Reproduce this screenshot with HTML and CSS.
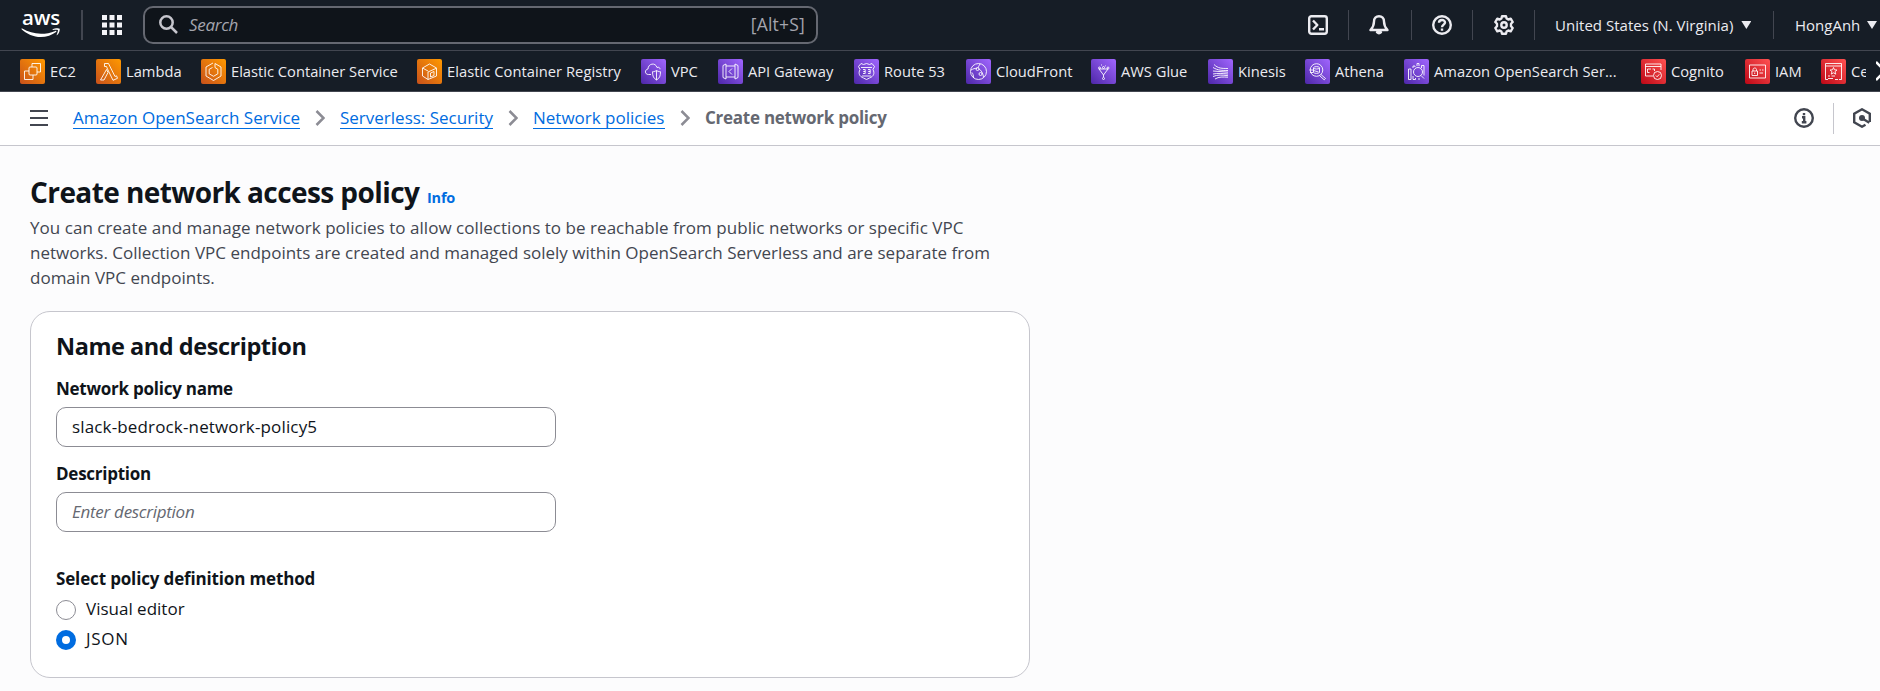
FILE: index.html
```
<!DOCTYPE html>
<html lang="en">
<head>
<meta charset="utf-8">
<title>Create network policy</title>
<link rel="stylesheet" href="styles.css">
</head>
<body>
<svg class="defs" aria-hidden="true">
  <defs>
    <linearGradient id="orange" x1="0" y1="1" x2="1" y2="0"><stop offset="0" stop-color="#c8511b"/><stop offset="1" stop-color="#f90"/></linearGradient>
    <linearGradient id="purple" x1="0" y1="1" x2="1" y2="0"><stop offset="0" stop-color="#4d27a8"/><stop offset="1" stop-color="#a166ff"/></linearGradient>
    <linearGradient id="red" x1="0" y1="1" x2="1" y2="0"><stop offset="0" stop-color="#bd0816"/><stop offset="1" stop-color="#ff5252"/></linearGradient>
  </defs>
</svg>

<header class="topbar">
  <a class="logo">
    <span class="logo-text">aws</span>
    <svg class="logo-smile" width="40" height="10" viewBox="0 0 40 10"><path d="M.6 1.2C.2.8.6.3 1.2.6 7 4 13 5.800 20 5.800c4.600 0 9.700-1 14.400-2.900.8-.3 1.400.5.7 1C31 7 25.500 9 19.800 9 12.500 9 5.800 6.100.6 1.200z"/><path d="M36.800 2.100c-.5-.7-3.500-.3-4.900-.2-.4.1-.5-.3-.1-.6C34.200-.3 38.100.1 38.600.7c.4.6-.1 4.500-2.400 6.400-.3.300-.7.100-.5-.3.500-1.300 1.600-4.100 1.100-4.700z"/></svg>
  </a>
  <span class="logo-divider"></span>
  <svg class="apps" width="20" height="20" viewBox="0 0 20 20"><path d="M0 0h5v5H0zM7.500 0h5v5h-5zM15 0h5v5h-5zM0 7.500h5v5H0zM7.500 7.500h5v5h-5zM15 7.500h5v5h-5zM0 15h5v5H0zM7.500 15h5v5h-5zM15 15h5v5h-5z"/></svg>
  <div class="search">
    <svg width="19" height="19" viewBox="0 0 19 19"><circle cx="7.500" cy="7.500" r="6.200"/><path d="M12 12l6 6"/></svg>
    <span class="search-hint">Search</span>
    <span class="search-key">[Alt+S]</span>
  </div>
  <nav class="tools">
    <span class="tool"><svg width="20" height="20" viewBox="0 0 20 20"><rect x="1.200" y="1.200" width="17.600" height="17.600" rx="2.200"/><path d="M5 5.500l4.300 4.500L5 14.500M11 14.200h5"/></svg></span>
    <span class="tool bell"><svg width="20" height="20" viewBox="0 0 20 20"><path d="M10 1.200c-3 0-5 2.200-5 5.200 0 4-1.300 6.200-3.500 8.600h17c-2.200-2.400-3.500-4.600-3.500-8.600 0-3-2-5.200-5-5.200z"/><path d="M8 17.200q2 2.200 4 0z"/></svg></span>
    <span class="tool"><svg width="20" height="20" viewBox="0 0 20 20"><circle cx="10" cy="10" r="8.800"/><path d="M7 7.800c0-3.800 6-3.600 6-.3 0 2-3 2.200-3 4.700M10 13.600v2.200"/></svg></span>
    <span class="tool"><svg width="20" height="20" viewBox="0 0 20 20"><path d="M8 1.200h4l.6 2.300 1.700 1 2.400-.8 2 3.300-1.700 1.800v2.400l1.700 1.800-2 3.300-2.400-.8-1.700 1-.6 2.300H8l-.6-2.300-1.700-1-2.400.8-2-3.300L3 11.200V8.800L1.300 7l2-3.300 2.400.8 1.700-1z"/><circle cx="10" cy="10" r="2.700"/></svg></span>
    <span class="tool menu"><span class="region">United States (N. Virginia)</span><i class="caret"></i></span>
    <span class="tool menu"><span class="user">HongAnh</span><i class="caret"></i></span>
  </nav>
</header>

<nav class="favorites">
  <a class="fav"><svg class="tile" viewBox="0 0 25 25"><rect width="25" height="25" rx="2" fill="url(#orange)"/><g><rect x="9" y="8" width="8" height="8" rx="1"/><path d="M12 8V4.500h8.500V13H17M9 12H4.500v8.500H13V16"/></g></svg><span>EC2</span></a>
  <a class="fav"><svg class="tile" viewBox="0 0 25 25"><rect width="25" height="25" rx="2" fill="url(#orange)"/><g><path d="M8.500 4.500h4l6.500 13 1.500-.7 1 2.500-4.500 2L11.500 10l-1-2.500h-2zM10.500 10.500l1.500 3-4 7.500H4.500z"/></g></svg><span>Lambda</span></a>
  <a class="fav"><svg class="tile" viewBox="0 0 25 25"><rect width="25" height="25" rx="2" fill="url(#orange)"/><g><path d="M12 4L5 8v9l7.500 4.500L20 17V8l-6-3.500v4l2.800 1.800v4.500l-4.300 2.500-4.300-2.500v-4.500L11.500 8.500"/></g></svg><span>Elastic Container Service</span></a>
  <a class="fav"><svg class="tile" viewBox="0 0 25 25"><rect width="25" height="25" rx="2" fill="url(#orange)"/><g><path d="M11 20.500L5.500 17V9l7-4 7 4M5.500 9l5.500 3M11 20.500V13l8.500-3.800V17z"/><path d="M13.500 18v-4l3.500-1.500v4z"/></g></svg><span class="ecr">Elastic Container Registry</span></a>
  <a class="fav"><svg class="tile" viewBox="0 0 25 25"><rect width="25" height="25" rx="2" fill="url(#purple)"/><g><path d="M10 15.500H7.500C3.500 15.500 3.500 10.500 7 10c0-5.500 7.500-7 9-1.500 2-.8 3 .3 3 1.800"/><path d="M15.500 11.500c2 1.200 3 1.200 4 1.200 0 4.500-1 6.500-4 8.300-3-1.800-4-3.800-4-8.300 1 0 2 0 4-1.200zM15.500 11.500V21"/></g></svg><span>VPC</span></a>
  <a class="fav"><svg class="tile" viewBox="0 0 25 25"><rect width="25" height="25" rx="2" fill="url(#purple)"/><g><path d="M8 5L5 6.500v12L8 20zM17 5l3 1.500v12L17 20zM8 7h9M8 18h9M14 9.500l-3 3 3 3"/></g></svg><span>API Gateway</span></a>
  <a class="fav"><svg class="tile" viewBox="0 0 25 25"><rect width="25" height="25" rx="2" fill="url(#purple)"/><g><path d="M7 4.500l2.500 1 3-1 3 1 2.500-1 2.500 3-1.500 3c2 4 .5 7-3.500 8.500l-3 1.500-3-1.500C5.500 17.500 4 14.500 6 10.500l-1.500-3z"/><path d="M7 8.500h11M8 17h9M9 10.500h2.200v2H9.500h1.700v2H9M14 10.500h2.200v2h-1.700 1.700v2H14"/></g></svg><span>Route 53</span></a>
  <a class="fav"><svg class="tile" viewBox="0 0 25 25"><rect width="25" height="25" rx="2" fill="url(#purple)"/><g><circle cx="12.500" cy="12.500" r="8"/><path d="M5 11c2-1 4-2 6-1.500M14 5c-1 2-2 3-2 4.500M13 10c2 1 4 4 4.500 8M7.500 19c0-3-.5-4-1.500-5.500"/><circle cx="11.500" cy="10" r="1.500"/><circle cx="14.500" cy="15" r="1.500"/></g></svg><span>CloudFront</span></a>
  <a class="fav"><svg class="tile" viewBox="0 0 25 25"><rect width="25" height="25" rx="2" fill="url(#purple)"/><g><path d="M8 10h9l-4.500 6zM12.500 16v2"/><circle cx="8.500" cy="9" r="1"/><circle cx="12.500" cy="8.500" r="1"/><circle cx="17" cy="9" r="1"/><circle cx="12.500" cy="19.500" r="1"/><path d="M10.500 5.500v1M14.500 6.500v.8"/></g></svg><span>AWS Glue</span></a>
  <a class="fav"><svg class="tile" viewBox="0 0 25 25"><rect width="25" height="25" rx="2" fill="url(#purple)"/><g><path d="M6 5.500c4 4 8 4 14 4M5 8.500c5 3 9 3 15 3M5 12l15 1.200M5 15c5-1 9-.5 15 0M5 17.500c5-2 9-1.500 15-.8M7 20c4-2.500 8-2 13-1.800"/></g></svg><span>Kinesis</span></a>
  <a class="fav"><svg class="tile" viewBox="0 0 25 25"><rect width="25" height="25" rx="2" fill="url(#purple)"/><g><circle cx="11.500" cy="11" r="6.300"/><path d="M16 15.500l4.500 4-1.300 1.300-4.500-4"/><ellipse cx="11.500" cy="8.800" rx="3" ry="1.200"/><path d="M8.500 9v4.500c1 1.200 5 1.200 6 0V9M4.500 11h4M5 13.500h3M8.500 11.500l5 1.500"/></g></svg><span>Athena</span></a>
  <a class="fav"><svg class="tile" viewBox="0 0 25 25"><rect width="25" height="25" rx="2" fill="url(#purple)"/><g><path d="M4.500 10H7v10.500H4.500zM9 9V7h2v1M9 17v3.500h2.500V19M13 7V4.500h2V7M17.500 9V6.500H20v10M14 20h2"/><circle cx="14" cy="13" r="4.500"/><path d="M17 16.500l3 3"/></g></svg><span class="os">Amazon OpenSearch Ser...</span></a>
  <a class="fav"><svg class="tile" viewBox="0 0 25 25"><rect width="25" height="25" rx="2" fill="url(#red)"/><g><path d="M12 17H4.500V5H20v6M4.500 7.500H20M6.500 10h3.500M6.500 10v3.500M6.500 13.500h2M11.500 10h2v2"/><circle cx="16.500" cy="16.500" r="4"/><path d="M14.800 16.500l1.300 1.300 2.200-2.500"/></g></svg><span>Cognito</span></a>
  <a class="fav"><svg class="tile" viewBox="0 0 25 25"><rect width="25" height="25" rx="2" fill="url(#red)"/><g><rect x="4.500" y="6" width="16" height="13"/><rect x="7" y="12" width="5.500" height="4.500"/><path d="M8 12v-1.500c0-2 3.500-2 3.500 0V12M9.700 13.500v1.500M14.500 11h1.500M17 11h1.500M14.500 14H18"/></g></svg><span>IAM</span></a>
  <a class="fav clipped"><svg class="tile" viewBox="0 0 25 25"><rect width="25" height="25" rx="2" fill="url(#red)"/><g><path d="M7 20.500H4.500V4.500h16v16H18M4.500 7h16M7 17h2M10.500 17H14M7 19.500h5M14 20.500h3"/><path d="M12.500 8.500l1 2.300 2.500.2-2 1.600.8 2.600-2.300-1.400-2.300 1.400.8-2.600-2-1.600 2.500-.2z"/></g></svg><span>Ce</span></a>
  <svg class="more" width="4" height="20" viewBox="0 0 4 20"><path d="M0 1l9 9-9 9"/></svg>
</nav>

<div class="crumbbar">
  <svg class="burger" width="18" height="16" viewBox="0 0 18 16"><path d="M0 1h18M0 8h18M0 15h18"/></svg>
  <nav class="crumbs">
    <a class="crumb c1">Amazon OpenSearch Service</a>
    <svg class="chev" width="10" height="16" viewBox="0 0 10 16"><path d="M1.500 1l7 7-7 7"/></svg>
    <a class="crumb c2">Serverless: Security</a>
    <svg class="chev" width="10" height="16" viewBox="0 0 10 16"><path d="M1.500 1l7 7-7 7"/></svg>
    <a class="crumb c3">Network policies</a>
    <svg class="chev" width="10" height="16" viewBox="0 0 10 16"><path d="M1.500 1l7 7-7 7"/></svg>
    <span class="current">Create network policy</span>
  </nav>
  <div class="panel-tools">
    <svg width="20" height="20" viewBox="0 0 20 20"><circle cx="10" cy="10" r="8.800"/><path d="M10 5v2.200M8 9.200h2.200v5M7.800 14.300h4.600"/></svg>
    <span class="panel-divider"></span>
    <svg width="18" height="20" viewBox="0 0 18 20"><path d="M16.800 14V5.700L9 1.300 1.200 5.700v8.600L9 18.700l3.500-2M9.500 10.500l6.800 4.200"/><circle class="dot" cx="9" cy="10" r="3"/></svg>
  </div>
</div>

<main class="content">
  <h1 class="title"><span class="title-text">Create network access policy</span><a class="info">Info</a></h1>
  <p class="intro"><span class="lead">You can create and manage network policies to allow collections to be reachable from public networks or specific VPC</span> networks. Collection VPC endpoints are created and managed solely within OpenSearch Serverless and are separate from domain VPC endpoints.</p>
  <section class="card">
    <h2 class="card-title">Name and description</h2>
    <label class="label">Network policy name</label>
    <div class="field value">slack-bedrock-network-policy5</div>
    <label class="label second">Description</label>
    <div class="field placeholder">Enter description</div>
    <div class="label method">Select policy definition method</div>
    <div class="option"><span class="radio"></span>Visual editor</div>
    <div class="option json"><span class="radio checked"></span>JSON</div>
  </section>
</main>
</body>
</html>
```
FILE: styles.css
```
* { box-sizing: border-box; }
body {
  margin: 0;
  height: 691px;
  overflow: hidden;
  background: #fcfcfd;
  color: #0f141a;
  font: 17px/25px "Open Sans", "Noto Sans", sans-serif;
}
svg { display: block; flex: none; }
.defs { position: absolute; width: 0; height: 0; }

/* top bar */
.topbar {
  display: flex;
  align-items: center;
  height: 51px;
  padding-left: 21px;
  background: #161d26;
  border-bottom: 1px solid #424650;
  color: #ebebf0;
}
.logo { display: flex; flex-direction: column; width: 60px; height: 50px; padding-top: 7px; }
.logo-text { font-size: 20.5px; line-height: 20px; height: 21px; font-weight: 600; letter-spacing: -.2px; color: #fff; padding-left: 1px; }
.logo-smile { fill: #fff; }
.logo-divider { width: 2px; height: 30px; background: #424650; margin-right: 19px; }
.apps { fill: #f3f3f7; margin-right: 21px; }
.search {
  display: flex;
  align-items: center;
  width: 675px;
  height: 38px;
  padding: 0 11px 1px 14px;
  border: 2px solid #656871;
  border-radius: 10px;
  background: #0f141a;
  color: #a4a4ad;
}
.search svg { fill: none; stroke: #c6c6cd; stroke-width: 2.500; }
.search-hint { margin-left: 11px; flex: 1; font-style: italic; letter-spacing: -.3px; }
.search-key { font-size: 17.500px; letter-spacing: .2px; }
.tools {
  display: grid;
  grid-template-columns: 62px 63px 61px 62px 239px 106px;
  margin-left: auto;
  align-items: center;
}
.tool { display: flex; justify-content: center; align-items: center; height: 30px; border-right: 1px solid #424650; }
.tool svg { fill: none; stroke: #ebebf0; stroke-width: 2.400; stroke-linejoin: round; }
.bell { padding-right: 2px; }
.tool.menu { height: 28px; justify-content: flex-start; padding-left: 20px; gap: 8px; font-size: 15px; font-weight: 500; white-space: nowrap; }
.tool:last-child { border: 0; padding-left: 21px; }
.region { letter-spacing: .03px; }
.user { width: 64px; }
.caret { width: 10px; height: 8px; background: #ebebf0; clip-path: polygon(0 0, 100% 0, 50% 100%); }

/* favourites */
.favorites {
  display: grid;
  grid-template-columns: 76px 105px 216px 224px 77px 136px 112px 125px 117px 97px 99px 237px 104px 76px 45px 14px;
  align-items: center;
  height: 41px;
  padding-left: 20px;
  background: #161d26;
  border-bottom: 1px solid #424650;
  color: #ebebf0;
  font-size: 14.700px;
  font-weight: 500;
}
.fav { display: flex; align-items: center; gap: 5px; white-space: nowrap; }
.ecr, .os { letter-spacing: .05px; }
.clipped { overflow: hidden; }
.tile { width: 25px; height: 25px; }
.tile g { fill: none; stroke: #fff; stroke-opacity: .88; stroke-width: 1; stroke-linejoin: round; }
.more { margin-left: 10px; fill: none; stroke: #fff; stroke-width: 2.500; }

/* breadcrumb bar */
.crumbbar {
  display: flex;
  align-items: center;
  height: 54px;
  padding: 0 9px 1px 30px;
  background: #fff;
  border-bottom: 1px solid #c6c6cd;
}
.burger { fill: none; stroke: #424650; stroke-width: 2; margin-right: 25px; }
.crumbs { display: flex; align-items: center; gap: 15px; }
.crumb { color: #006ce0; height: 22px; line-height: 21px; border-bottom: 1px solid #006ce0; white-space: nowrap; }
.c1 { width: 227px; }
.c2 { width: 153px; }
.c3 { width: 132px; }
.chev { fill: none; stroke: #8c8c94; stroke-width: 2.500; }
.current { color: #656871; font-weight: 700; line-height: 22px; letter-spacing: -.26px; }
.panel-tools { display: flex; align-items: center; gap: 19px; margin-left: auto; }
.panel-tools svg { fill: none; stroke: #424650; stroke-width: 2.400; }
.panel-tools .dot { fill: #424650; stroke: none; }
.panel-divider { width: 1px; height: 31px; background: #c6c6cd; }

/* page content */
.content { padding: 28px 30px 0; }
.title { display: flex; align-items: baseline; margin: 0; height: 36px; font-size: 28px; line-height: 36px; letter-spacing: -.58px; font-weight: 700; }
.title-text { width: 397px; white-space: nowrap; }
.info { font-size: 14.500px; letter-spacing: -.2px; color: #006ce0; }
.intro { margin: 5px 0 21px; width: 975px; color: #424650; }
.lead { letter-spacing: .04px; }
.card { width: 1000px; height: 367px; padding: 19px 25px 0; border: 1px solid #c6c6cd; border-radius: 20px; background: #fff; }
.card-title { margin: 0 0 15px; font-size: 23.500px; line-height: 30px; letter-spacing: -.46px; }
.label { display: block; font-weight: 700; letter-spacing: -.25px; }
.second { margin-top: 14px; }
.field { width: 500px; height: 40px; margin-top: 6px; padding: 0 15px; border: 1px solid #8c8c94; border-radius: 10px; line-height: 38px; }
.value { letter-spacing: .15px; }
.placeholder { color: #656871; font-style: italic; letter-spacing: -.28px; }
.method { margin: 34px 0 5px; letter-spacing: -.15px; }
.option { display: flex; align-items: center; gap: 10px; height: 25px; margin-bottom: 5px; }
.json { letter-spacing: .7px; }
.radio { width: 20px; height: 20px; margin-top: 2px; border: 1px solid #8c8c94; border-radius: 50%; background: #fff; }
.checked { border: 6px solid #006ce0; }
```
